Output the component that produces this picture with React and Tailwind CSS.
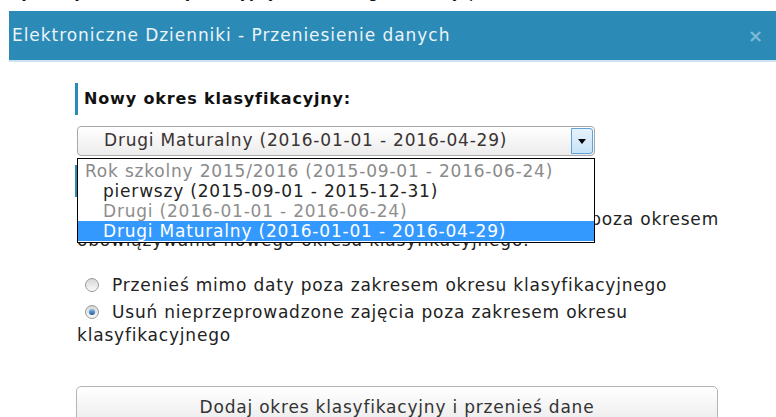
import React from "react";

const body = { fontFamily: '"DejaVu Sans", Verdana, sans-serif' };

// stary, windowsowy radio button
function Radio({ checked }) {
  return (
    <span className="relative inline-block align-[-1px] w-[14px] h-[14px] rounded-full border border-[#9a9a9a] bg-gradient-to-b from-[#d6d6d6] to-[#fafafa] ml-[8px] mr-[13px]">
      {checked && (
        <span className="absolute left-[3px] top-[3px] w-[6px] h-[6px] rounded-full bg-gradient-to-b from-[#86bdea] to-[#1c5c9c]" />
      )}
    </span>
  );
}

export default function App() {
  const [mode, setMode] = React.useState("usun");

  const options = [
    { label: "Rok szkolny 2015/2016 (2015-09-01 - 2016-06-24)", group: true },
    { label: "pierwszy (2015-09-01 - 2015-12-31)" },
    { label: "Drugi (2016-01-01 - 2016-06-24)", disabled: true },
    { label: "Drugi Maturalny (2016-01-01 - 2016-04-29)", selected: true },
  ];

  return (
    <div className="relative w-[776px] h-[417px] overflow-hidden bg-white text-[#222] tracking-[0.8px]" style={body}>
      {/* tekst strony pod oknem */}
      <div className="h-[11px] overflow-hidden">
        <div className="mt-[-19px] pl-[4px] leading-[20px] text-[17px] whitespace-nowrap text-[#111]">
          Wybrany okres klasyfikacyjny, do którego zostały przeniesione dane
        </div>
      </div>

      {/* okno dialogowe */}
      <div className="ml-[9px]">
        <div className="h-[51px] flex items-center justify-between bg-[#2b8ab6] border-b-2 border-[#cbe4f0] pl-[3px] pr-[12px]">
          <span className="text-[17px] tracking-[0.95px] text-[#eaf4f9]">Elektroniczne Dzienniki - Przeniesienie danych</span>
          <span className="text-[18px] font-bold text-[#7dbad6] leading-none">×</span>
        </div>

        <div className="relative pl-[66px] pt-[21px] w-[711px]">
          <div className="h-[32px] flex items-center border-l-[3px] border-[#2b8ab6] pl-[6px] text-[16px] tracking-[0.85px] font-bold text-[#111]">
            Nowy okres klasyfikacyjny:
          </div>

          {/* select */}
          <div className="relative ml-[2px] mt-[11px] h-[30px] w-[518px] flex items-center rounded-[4px] border border-[#a9a9a9] bg-gradient-to-b from-white to-[#ececec]">
            <span className="pl-[26px] text-[17px] text-[#3a3333]">Drugi Maturalny (2016-01-01 - 2016-04-29)</span>
            <span className="absolute right-[1px] top-[1px] bottom-[1px] w-[22px] flex items-center justify-center border border-[#5fa3d8] bg-gradient-to-b from-[#e6f3fc] to-[#c7e3f7] rounded-r-[3px]">
              <span className="w-0 h-0 border-l-[4px] border-r-[4px] border-t-[5px] border-l-transparent border-r-transparent border-t-black" />
            </span>
          </div>

          <div className="mt-[9px] h-[32px] flex items-center border-l-[3px] border-[#2b8ab6] pl-[6px] text-[16px] font-bold text-[#111]">
            Zajęcia poza okresem:
          </div>
          <div className="mt-[12px] ml-[2px] w-[642px] leading-[21px] text-[17px]">
            <div className="text-right whitespace-nowrap">Zajęcia zaplanowane w dzienniku poza okresem</div>
            <div>obowiązywania nowego okresu klasyfikacyjnego:</div>
          </div>

          <div className="mt-[23px] ml-[2px] text-[17px] w-[642px]">
            <div className="leading-[23px] cursor-default" onClick={() => setMode("przenies")}>
              <Radio checked={mode === "przenies"} />
              Przenieś mimo daty poza zakresem okresu klasyfikacyjnego
            </div>
            <div className="mt-[4px] leading-[23px] cursor-default" onClick={() => setMode("usun")}>
              <Radio checked={mode === "usun"} />
              Usuń nieprzeprowadzone zajęcia poza zakresem okresu klasyfikacyjnego
            </div>
          </div>

          <button className="mt-[39px] ml-[1px] h-[44px] w-[642px] rounded-[5px] border border-[#b4b4b4] bg-gradient-to-b from-white to-[#e9e9e9] text-[17px] tracking-[0.8px] text-[#333]">
            Dodaj okres klasyfikacyjny i przenieś dane
          </button>

          {/* rozwinięta lista okresów */}
          <div className="absolute left-[68px] top-[96px] w-[518px] h-[85px] border border-black bg-white pt-[2px] text-[17px]">
            {options.map((o, i) => (
              <div
                key={i}
                className={`h-[20px] leading-[20px] whitespace-nowrap ${
                  o.group ? "pl-[7px] text-[#8a8a8a]" : "pl-[25px]"
                } ${o.disabled ? "text-[#8e8e8e]" : ""} ${
                  o.selected ? "bg-[#3399ff] text-white" : ""
                } ${!o.group && !o.disabled && !o.selected ? "text-[#222]" : ""}`}
              >
                {o.label}
              </div>
            ))}
          </div>
        </div>
      </div>
    </div>
  );
}
